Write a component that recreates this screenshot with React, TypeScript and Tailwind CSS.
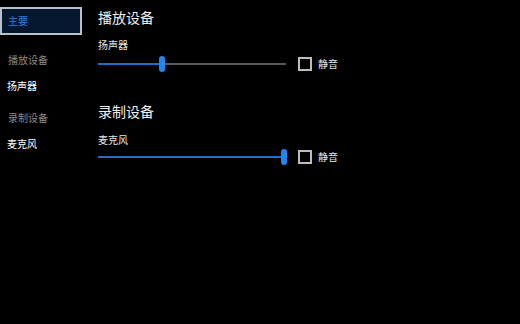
import React from "react";

const font = { fontFamily: '"Noto Sans CJK SC", "Noto Sans", sans-serif' };

function Slider({ pct }: { pct: number }) {
  return (
    <div className="relative h-[16px] w-[188px] flex items-center">
      <div className="h-[2px] w-full bg-[#5a5a5a]" />
      <div className="absolute left-0 top-[7px] h-[2px] bg-[#1f6fc8]" style={{ width: `${pct}%` }} />
      <div
        className="absolute top-0 h-[16px] w-[6px] rounded-[3px] bg-[#1e88f0]"
        style={{ left: `calc(${pct}% - 3px)` }}
      />
    </div>
  );
}

function Row({ pct }: { pct: number }) {
  return (
    <div className="flex items-center h-[16px]">
      <Slider pct={pct} />
      <div className="ml-[12px] h-[14px] w-[14px] border-2 border-[#bdbdbd]" />
      <span className="ml-[6px] text-[10px] leading-[14px] text-[#e6e6e6]">静音</span>
    </div>
  );
}

export default function App() {
  return (
    <div className="w-[520px] h-[324px] bg-black flex overflow-hidden" style={font}>
      <div className="w-[82px] flex flex-col pt-[7px]">
        <div className="h-[28px] border-2 border-[#b9c1c9] bg-[#04172e] flex items-center pl-[6px]">
          <span className="text-[10px] leading-[14px] text-[#2f7fd8]">主要</span>
        </div>
        <div className="mt-[18px] pl-[8px] text-[10px] leading-[14px] text-[#8a8a8a]">播放设备</div>
        <div className="mt-[12px] pl-[7px] text-[10px] leading-[14px] text-white">扬声器</div>
        <div className="mt-[18px] pl-[8px] text-[10px] leading-[14px] text-[#8a8a8a]">录制设备</div>
        <div className="mt-[12px] pl-[7px] text-[10px] leading-[14px] text-white">麦克风</div>
      </div>
      <div className="ml-[16px] flex flex-col pt-[8px]">
        <div className="h-[18px] text-[14px] leading-[18px] text-[#f0f0f0]">播放设备</div>
        <div className="mt-[12px] h-[14px] text-[10px] leading-[14px] text-[#e6e6e6]">扬声器</div>
        <div className="mt-[4px]">
          <Row pct={34} />
        </div>
        <div className="mt-[30px] h-[18px] text-[14px] leading-[18px] text-[#f0f0f0]">录制设备</div>
        <div className="mt-[13px] h-[14px] text-[10px] leading-[14px] text-[#e6e6e6]">麦克风</div>
        <div className="mt-[2px]">
          <Row pct={99} />
        </div>
      </div>
    </div>
  );
}
